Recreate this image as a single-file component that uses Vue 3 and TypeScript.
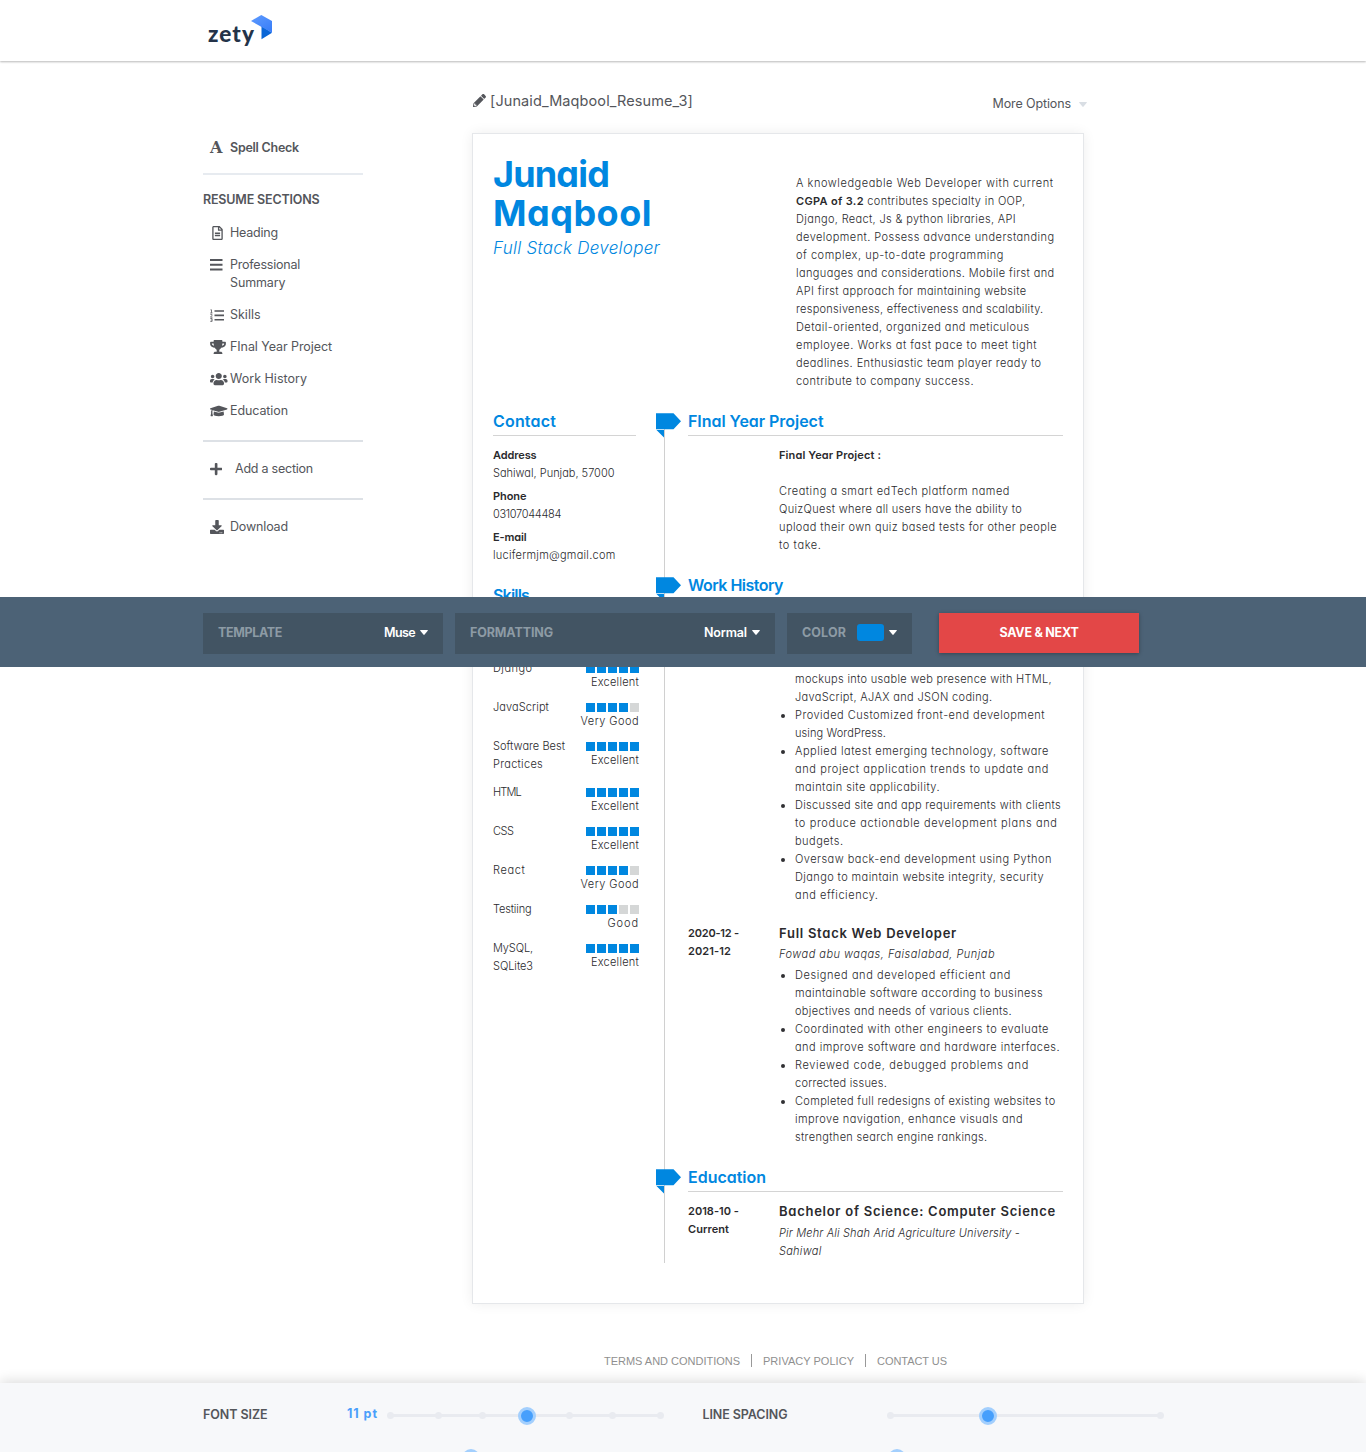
<script setup lang="ts">
import type { Directive } from 'vue'

interface Line { t: string; w: number; b?: string }
interface Skill { name: Line[]; score: number }
interface NavItem { icon: string; lines: Line[] }

// Tracks a line of text out or in so that it occupies the given measure.
const vFit: Directive<HTMLElement, number> = {
  mounted(el, { value }) {
    const count = (el.textContent ?? '').length
    const natural = el.getBoundingClientRect().width
    if (count && natural) el.style.letterSpacing = `${((value - natural) / count).toFixed(4)}px`
  },
}

const nav: NavItem[] = [
  { icon: 'file', lines: [{ t: 'Heading', w: 48 }] },
  { icon: 'bars', lines: [{ t: 'Professional', w: 70 }, { t: 'Summary', w: 55.5 }] },
  { icon: 'list', lines: [{ t: 'Skills', w: 30.5 }] },
  { icon: 'trophy', lines: [{ t: 'FInal Year Project', w: 102 }] },
  { icon: 'users', lines: [{ t: 'Work History', w: 77 }] },
  { icon: 'cap', lines: [{ t: 'Education', w: 58 }] },
]

const summary: Line[] = [
  { t: 'A knowledgeable Web Developer with current', w: 257.5 },
  { b: 'CGPA of 3.2', t: ' contributes specialty in OOP,', w: 229.5 },
  { t: 'Django, React, Js & python libraries, API', w: 220 },
  { t: 'development. Possess advance understanding', w: 258.5 },
  { t: 'of complex, up-to-date programming', w: 208 },
  { t: 'languages and considerations. Mobile first and', w: 258.5 },
  { t: 'API first approach for maintaining website', w: 230.5 },
  { t: 'responsiveness, effectiveness and scalability.', w: 247.5 },
  { t: 'Detail-oriented, organized and meticulous', w: 233.5 },
  { t: 'employee. Works at fast pace to meet tight', w: 241 },
  { t: 'deadlines. Enthusiastic team player ready to', w: 245.5 },
  { t: 'contribute to company success.', w: 178 },
]

const contact = [
  { label: { t: 'Address', w: 43.5 }, value: { t: 'Sahiwal, Punjab, 57000', w: 121.5 } },
  { label: { t: 'Phone', w: 33.5 }, value: { t: '03107044484', w: 68 } },
  { label: { t: 'E-mail', w: 33.5 }, value: { t: 'lucifermjm@gmail.com', w: 122.5 } },
]

const levels: Record<number, Line> = {
  3: { t: 'Good', w: 31.5 },
  4: { t: 'Very Good', w: 58.5 },
  5: { t: 'Excellent', w: 48 },
}

const skills: Skill[] = [
  { name: [{ t: 'Django', w: 39.5 }], score: 5 },
  { name: [{ t: 'JavaScript', w: 56 }], score: 4 },
  { name: [{ t: 'Software Best', w: 72 }, { t: 'Practices', w: 50 }], score: 5 },
  { name: [{ t: 'HTML', w: 28 }], score: 5 },
  { name: [{ t: 'CSS', w: 20.5 }], score: 5 },
  { name: [{ t: 'React', w: 32.5 }], score: 4 },
  { name: [{ t: 'Testiing', w: 38.5 }], score: 3 },
  { name: [{ t: 'MySQL,', w: 40 }, { t: 'SQLite3', w: 40 }], score: 5 },
]

const project: Line[] = [
  { t: 'Creating a smart edTech platform named', w: 231 },
  { t: 'QuizQuest where all users have the ability to', w: 243 },
  { t: 'upload their own quiz based tests for other people', w: 278 },
  { t: 'to take.', w: 42.5 },
]

const firstJob: Line[][] = [
  [{ t: 'Provided Customized front-end development', w: 250 }, { t: 'using WordPress.', w: 91 }],
  [
    { t: 'Applied latest emerging technology, software', w: 254 },
    { t: 'and project application trends to update and', w: 254 },
    { t: 'maintain site applicability.', w: 145 },
  ],
  [
    { t: 'Discussed site and app requirements with clients', w: 266 },
    { t: 'to produce actionable development plans and', w: 262.5 },
    { t: 'budgets.', w: 48.5 },
  ],
  [
    { t: 'Oversaw back-end development using Python', w: 257 },
    { t: 'Django to maintain website integrity, security', w: 249 },
    { t: 'and efficiency.', w: 83.5 },
  ],
]
const firstJobLead: Line[] = [
  { t: 'mockups into usable web presence with HTML,', w: 257 },
  { t: 'JavaScript, AJAX and JSON coding.', w: 197.5 },
]

const secondJob: Line[][] = [
  [
    { t: 'Designed and developed efficient and', w: 216 },
    { t: 'maintainable software according to business', w: 248 },
    { t: 'objectives and needs of various clients.', w: 217 },
  ],
  [
    { t: 'Coordinated with other engineers to evaluate', w: 254 },
    { t: 'and improve software and hardware interfaces.', w: 265 },
  ],
  [{ t: 'Reviewed code, debugged problems and', w: 234 }, { t: 'corrected issues.', w: 92 }],
  [
    { t: 'Completed full redesigns of existing websites to', w: 260.5 },
    { t: 'improve navigation, enhance visuals and', w: 228 },
    { t: 'strengthen search engine rankings.', w: 192.5 },
  ],
]

const fontStops = [0, 48, 92, 137, 179, 222, 270]
</script>

<template>
  <div class="app">
    <header class="top">
      <div class="logo">
        <span class="word" v-fit="47">zety</span>
        <svg class="mark" width="21" height="25" viewBox="0 0 21 25">
          <defs>
            <linearGradient id="fold" x1="0" y1="0" x2="0.7" y2="1">
              <stop offset="0" stop-color="#5f9bff" />
              <stop offset="1" stop-color="#3a7ff8" />
            </linearGradient>
          </defs>
          <path d="M10.500 11L21 17.800 10.500 24.300z" fill="#0a66d6" />
          <path d="M0 6L10.300 0 21 6v11.800z" fill="url(#fold)" />
        </svg>
      </div>
    </header>

    <div class="body">
      <aside class="side">
        <div class="item spell">
          <span class="ico serif">A</span>
          <span class="txt strong"><span v-fit="69">Spell Check</span></span>
        </div>
        <hr class="pale" />
        <div class="caption"><span v-fit="116.5">RESUME SECTIONS</span></div>
        <nav>
          <div v-for="n in nav" :key="n.icon" class="item">
            <span class="ico">
              <svg v-if="n.icon === 'file'" class="shift" width="11" height="14" viewBox="0 0 384 512"><path d="M288 248v28c0 6.6-5.4 12-12 12H108c-6.6 0-12-5.4-12-12v-28c0-6.6 5.4-12 12-12h168c6.6 0 12 5.4 12 12zm-12 72H108c-6.6 0-12 5.4-12 12v28c0 6.6 5.4 12 12 12h168c6.6 0 12-5.4 12-12v-28c0-6.6-5.4-12-12-12zm108-188.1V464c0 26.5-21.5 48-48 48H48c-26.5 0-48-21.5-48-48V48C0 21.5 21.5 0 48 0h204.1C264.8 0 277 5.1 286 14.1L369.9 98c9 8.9 14.1 21.2 14.1 33.9zm-128-80V128h76.1L256 51.9zM336 464V176H232c-13.3 0-24-10.7-24-24V48H48v416h288z" /></svg>
              <svg v-else-if="n.icon === 'bars'" width="13" height="12" viewBox="0 0 13 12"><path d="M0 0h12.500v2H0zM0 4.700h12.500v2H0zM0 9.400h12.500v2H0z" /></svg>
              <svg v-else-if="n.icon === 'list'" width="14" height="13" viewBox="0 0 14 13"><path d="M4.500 1.200H14v1.600H4.500zM4.500 5.600H14v1.600H4.500zM4.500 10H14v1.600H4.500z" /><path d="M.5 .8h1v3M.3 3.900h2.200M.3 5.300h1.600v1.200L.5 8.200h2M.3 9.500h1.800v2.900H.3M.8 11h1" fill="none" stroke="#54565b" stroke-width=".8" /></svg>
              <svg v-else-if="n.icon === 'trophy'" width="16" height="14" viewBox="0 0 576 512"><path d="M552 64H448V24c0-13.3-10.7-24-24-24H152c-13.3 0-24 10.7-24 24v40H24C10.7 64 0 74.7 0 88v56c0 35.7 22.5 72.4 61.9 100.7 31.5 22.7 69.8 37.1 110 41.7C203.3 338.5 240 360 240 360v72h-48c-35.3 0-64 20.7-64 56v12c0 6.6 5.4 12 12 12h296c6.6 0 12-5.4 12-12v-12c0-35.3-28.7-56-64-56h-48v-72s36.7-21.5 68.1-73.6c40.3-4.6 78.6-19 110-41.7 39.3-28.3 61.9-65 61.9-100.7V88c0-13.3-10.7-24-24-24zM99.3 192.8C74.9 175.2 64 155.6 64 144v-16h64.2c1 32.6 5.8 61.2 12.8 86.2-15.1-5.2-29.2-12.4-41.7-21.4zM512 144c0 16.1-17.7 36.1-35.3 48.8-12.5 9-26.7 16.2-41.8 21.4 7-25 11.8-53.6 12.8-86.2H512v16z" /></svg>
              <svg v-else-if="n.icon === 'users'" width="17.5" height="14" viewBox="0 0 640 512"><path d="M96 224c35.3 0 64-28.7 64-64s-28.7-64-64-64-64 28.7-64 64 28.7 64 64 64zm448 0c35.3 0 64-28.7 64-64s-28.7-64-64-64-64 28.7-64 64 28.7 64 64 64zm32 32h-64c-17.6 0-33.5 7.1-45.1 18.6 40.3 22.1 68.9 62 75.1 109.4h66c17.7 0 32-14.3 32-32v-32c0-35.3-28.7-64-64-64zm-256 0c61.9 0 112-50.1 112-112S381.9 32 320 32 208 82.1 208 144s50.1 112 112 112zm76.8 32h-8.3c-20.8 10-43.9 16-68.5 16s-47.6-6-68.5-16h-8.3C179.6 288 128 339.6 128 403.2V432c0 26.5 21.5 48 48 48h288c26.5 0 48-21.5 48-48v-28.8c0-63.6-51.6-115.2-115.2-115.2zm-223.7-13.4C161.5 263.1 145.6 256 128 256H64c-35.3 0-64 28.7-64 64v32c0 17.7 14.3 32 32 32h65.900c6.300-47.400 34.900-87.300 75.200-109.400z" /></svg>
              <svg v-else width="17.5" height="14" viewBox="0 0 640 512"><path d="M622.34 153.2L343.4 67.5c-15.2-4.67-31.6-4.67-46.79 0L17.66 153.2c-23.54 7.23-23.54 38.36 0 45.59l48.63 14.94c-10.67 13.19-17.23 29.28-17.88 46.9C38.78 266.15 32 276.11 32 288c0 10.78 5.68 19.85 13.86 25.65L20.33 428.53C18.11 438.52 25.71 448 35.94 448h56.11c10.24 0 17.84-9.48 15.62-19.47L82.14 313.65C90.32 307.85 96 298.78 96 288c0-11.57-6.47-21.25-15.66-26.87.76-15.02 8.44-28.3 20.69-36.72L296.6 284.5c9.06 2.78 26.44 6.25 46.79 0l278.95-85.7c23.55-7.24 23.55-38.36 0-45.6zM352.79 315.09c-28.53 8.76-52.84 3.92-65.59 0l-145.02-44.55L128 384c0 35.35 85.96 64 192 64s192-28.65 192-64l-14.18-113.47-145.03 44.56z" /></svg>
            </span>
            <span class="txt"><span v-for="l in n.lines" :key="l.t" v-fit="l.w">{{ l.t }}</span></span>
          </div>
        </nav>
        <hr class="after-nav" />
        <div class="item add">
          <span class="ico"><svg width="12.25" height="14" viewBox="0 0 448 512"><path d="M416 208H272V64c0-17.67-14.33-32-32-32h-32c-17.67 0-32 14.33-32 32v144H32c-17.67 0-32 14.33-32 32v32c0 17.67 14.33 32 32 32h144v144c0 17.67 14.33 32 32 32h32c17.67 0 32-14.33 32-32V304h144c17.67 0 32-14.33 32-32v-32c0-17.67-14.33-32-32-32z" /></svg></span>
          <span class="txt"><span v-fit="78">Add a section</span></span>
        </div>
        <hr />
        <div class="item dl">
          <span class="ico"><svg width="14" height="14" viewBox="0 0 512 512"><path d="M216 0h80c13.3 0 24 10.7 24 24v168h87.7c17.8 0 26.7 21.5 14.1 34.1L269.7 378.3c-7.5 7.5-19.8 7.5-27.3 0L90.1 226.1c-12.6-12.6-3.7-34.1 14.1-34.1H192V24c0-13.3 10.7-24 24-24zm296 376v112c0 13.3-10.7 24-24 24H24c-13.3 0-24-10.7-24-24V376c0-13.3 10.7-24 24-24h146.7l49 49c20.1 20.1 52.5 20.1 72.6 0l49-49H488c13.3 0 24 10.7 24 24zm-124 88c0-11-9-20-20-20s-20 9-20 20 9 20 20 20 20-9 20-20zm64 0c0-11-9-20-20-20s-20 9-20 20 9 20 20 20 20-9 20-20z" /></svg></span>
          <span class="txt"><span v-fit="58">Download</span></span>
        </div>
      </aside>

      <main class="main">
        <div class="titlebar">
          <div class="doc-name">
            <svg width="13" height="13" viewBox="0 0 512 512"><path d="M497.9 142.1l-46.1 46.1c-4.7 4.7-12.3 4.7-17 0l-111-111c-4.7-4.7-4.7-12.3 0-17l46.1-46.1c18.7-18.7 49.1-18.7 67.9 0l60.1 60.1c18.8 18.7 18.8 49.1 0 67.9zM284.2 99.8L21.6 362.4.4 483.9c-2.9 16.4 11.4 30.6 27.8 27.8l121.5-21.3 262.6-262.6c4.7-4.7 4.7-12.3 0-17l-111-111c-4.8-4.7-12.4-4.7-17.1 0zM88 424h48v36.3l-64.5 11.3-31.1-31.1L51.7 376H88v48z" /></svg>
            <span v-fit="203">[Junaid_Maqbool_Resume_3]</span>
          </div>
          <div class="more">
            <span v-fit="78.5">More Options</span>
            <svg width="8" height="5" viewBox="0 0 8 5"><path d="M.7 0h6.6q1 0 .4.8L4.600 4.600q-.6.6-1.200 0L.3.8Q-.3 0 .7 0z" /></svg>
          </div>
        </div>

        <article class="page">
          <div class="intro">
            <div class="who">
              <h1><span v-fit="116">Junaid</span><span v-fit="159">Maqbool</span></h1>
              <p class="role"><span v-fit="167">Full Stack Developer</span></p>
            </div>
            <div class="summary">
              <span v-for="l in summary" :key="l.t" class="line"><span v-fit="l.w"><b v-if="l.b">{{ l.b }}</b>{{ l.t }}</span></span>
            </div>
          </div>

          <div class="columns">
            <section class="left">
              <h2><span v-fit="63">Contact</span></h2>
              <div v-for="c in contact" :key="c.label.t" class="contact">
                <b class="line"><span v-fit="c.label.w">{{ c.label.t }}</span></b>
                <span class="line"><span v-fit="c.value.w">{{ c.value.t }}</span></span>
              </div>
              <h2 class="next"><span v-fit="36">Skills</span></h2>
              <div class="skills">
                <div v-for="s in skills" :key="s.name[0].t" class="skill">
                  <div class="skill-name"><span v-for="l in s.name" :key="l.t" class="line"><span v-fit="l.w">{{ l.t }}</span></span></div>
                  <div class="rating">
                    <div class="squares"><i v-for="k in 5" :key="k" :class="{ on: k <= s.score }"></i></div>
                    <span class="level"><span v-fit="levels[s.score].w">{{ levels[s.score].t }}</span></span>
                  </div>
                </div>
              </div>
            </section>

            <section class="right">
              <h2>
                <svg class="flag" width="25" height="25" viewBox="0 0 25 25"><path d="M0 .3h17.500L25 8.300l-7.500 8H0zM.5 17H8v7.500z" /></svg>
                <span v-fit="135.5">FInal Year Project</span>
              </h2>
              <div class="entry">
                <div class="dates"></div>
                <div class="detail">
                  <b class="line blank-after"><span v-fit="102">Final Year Project :</span></b>
                  <span v-for="l in project" :key="l.t" class="line"><span v-fit="l.w">{{ l.t }}</span></span>
                </div>
              </div>

              <h2 class="next">
                <svg class="flag" width="25" height="25" viewBox="0 0 25 25"><path d="M0 .3h17.500L25 8.300l-7.500 8H0zM.5 17H8v7.500z" /></svg>
                <span v-fit="95">Work History</span>
              </h2>
              <div class="entry current">
                <div class="dates"></div>
                <div class="detail">
                  <div class="lead"><span v-for="l in firstJobLead" :key="l.t" class="line"><span v-fit="l.w">{{ l.t }}</span></span></div>
                  <ul>
                    <li v-for="(item, k) in firstJob" :key="k"><div><span v-for="l in item" :key="l.t" class="line"><span v-fit="l.w">{{ l.t }}</span></span></div></li>
                  </ul>
                </div>
              </div>
              <div class="entry second">
                <div class="dates"><b class="line"><span v-fit="51">2020-12 -</span></b><b class="line"><span v-fit="43">2021-12</span></b></div>
                <div class="detail">
                  <h3><span v-fit="178">Full Stack Web Developer</span></h3>
                  <em class="place"><span class="line"><span v-fit="216">Fowad abu waqas, Faisalabad, Punjab</span></span></em>
                  <ul>
                    <li v-for="(item, k) in secondJob" :key="k"><div><span v-for="l in item" :key="l.t" class="line"><span v-fit="l.w">{{ l.t }}</span></span></div></li>
                  </ul>
                </div>
              </div>

              <h2 class="next">
                <svg class="flag" width="25" height="25" viewBox="0 0 25 25"><path d="M0 .3h17.500L25 8.300l-7.500 8H0zM.5 17H8v7.500z" /></svg>
                <span v-fit="78">Education</span>
              </h2>
              <div class="entry">
                <div class="dates"><b class="line"><span v-fit="51">2018-10 -</span></b><b class="line"><span v-fit="41">Current</span></b></div>
                <div class="detail">
                  <h3><span v-fit="277">Bachelor of Science: Computer Science</span></h3>
                  <em class="place school"><span class="line"><span v-fit="241">Pir Mehr Ali Shah Arid Agriculture University -</span></span><span class="line"><span v-fit="42.5">Sahiwal</span></span></em>
                </div>
              </div>
            </section>
          </div>
        </article>

        <footer class="links">
          <a><span v-fit="136">TERMS AND CONDITIONS</span></a>
          <a><span v-fit="91">PRIVACY POLICY</span></a>
          <a><span v-fit="70">CONTACT US</span></a>
        </footer>
      </main>
    </div>

    <div class="toolbar">
      <div class="pick template">
        <span class="lbl"><span v-fit="64">TEMPLATE</span></span>
        <span class="val"><span v-fit="31">Muse</span></span>
        <svg width="8" height="5" viewBox="0 0 8 5"><path d="M.7 0h6.6q1 0 .4.8L4.600 4.600q-.6.6-1.200 0L.3.8Q-.3 0 .7 0z" /></svg>
      </div>
      <div class="pick formatting">
        <span class="lbl"><span v-fit="83">FORMATTING</span></span>
        <span class="val"><span v-fit="43">Normal</span></span>
        <svg width="8" height="5" viewBox="0 0 8 5"><path d="M.7 0h6.6q1 0 .4.8L4.600 4.600q-.6.6-1.200 0L.3.8Q-.3 0 .7 0z" /></svg>
      </div>
      <div class="pick color">
        <span class="lbl"><span v-fit="44">COLOR</span></span>
        <i class="swatch"></i>
        <svg width="8" height="5" viewBox="0 0 8 5"><path d="M.7 0h6.6q1 0 .4.8L4.600 4.600q-.6.6-1.200 0L.3.8Q-.3 0 .7 0z" /></svg>
      </div>
      <button class="save"><span v-fit="79">SAVE &amp; NEXT</span></button>
    </div>

    <div class="settings">
      <div class="setting">
        <span class="name"><span v-fit="64.5">FONT SIZE</span></span>
        <span class="amount"><span v-fit="31">11 pt</span></span>
        <div class="slider">
          <i v-for="s in fontStops" :key="s" class="stop" :style="{ left: s + 'px' }"></i>
          <i class="knob" :style="{ left: '137px' }"></i>
          <i class="knob lower" :style="{ left: '81px' }"></i>
        </div>
      </div>
      <div class="setting spacing">
        <span class="name"><span v-fit="85">LINE SPACING</span></span>
        <div class="slider">
          <i v-for="s in [0, 270]" :key="s" class="stop" :style="{ left: s + 'px' }"></i>
          <i class="knob" :style="{ left: '98px' }"></i>
          <i class="knob lower" :style="{ left: '7px' }"></i>
        </div>
      </div>
    </div>
  </div>
</template>

<style>
body { background: #fff; }
</style>

<style scoped>
* { box-sizing: border-box; }
.app {
  position: relative;
  display: flex;
  flex-direction: column;
  width: 1366px;
  height: 1452px;
  overflow: hidden;
  background: #fff;
  color: #54565b;
  font-family: Inter, "Liberation Sans", sans-serif;
  font-size: 12.5px;
}
svg { display: block; flex: none; fill: #54565b; }
h1, h2, h3, p, ul { margin: 0; padding: 0; font-weight: 600; }
span { white-space: pre; }

.top {
  flex: none;
  height: 61px;
  background: #fff;
  box-shadow: 0 1px 2px rgba(0, 0, 0, .28);
  padding: 15px 0 0 208px;
}
.logo { display: flex; }
.word {
  display: inline-block;
  height: 34px;
  margin-top: 2px;
  line-height: 34px;
  font-family: Lato, "Open Sans", sans-serif;
  font-weight: 900;
  font-size: 22.5px;
  color: #243349;
}
.mark { margin-left: -4px; }

.body { display: flex; flex: none; height: 1322px; padding-left: 203px; }
.side { width: 160px; margin-right: 109px; padding-top: 78px; flex: none; }
.side hr { height: 2px; margin: 0; border: 0; background: #dde1e6; }
.side hr.pale { margin-top: 16px; background: #e7ebf0; }
.item { display: flex; line-height: 18px; margin-bottom: 14px; padding-left: 7px; }
.item.spell { margin: 0; }
.ico { display: flex; align-items: center; width: 20px; height: 18px; flex: none; }
.ico .shift { margin-left: 2px; }
.serif { font: 700 16px/18px "DejaVu Serif", serif; }
.txt { display: flex; flex-direction: column; align-items: flex-start; }
.strong { font-weight: 600; }
.caption { margin: 16px 0 15px; line-height: 18px; font-weight: 600; }
.side hr.after-nav { margin-top: 20px; }
.item.add { margin: 18px 0 20px; }
.item.add .ico { width: 25px; }
.item.dl { margin-top: 18px; }

.main { width: 615px; flex: none; }
.titlebar { display: flex; justify-content: space-between; height: 72px; }
.doc-name { display: flex; align-items: center; gap: 4px; height: 20px; margin-top: 29px; padding-left: 1px; font-size: 14.5px; }
.more { display: flex; align-items: center; gap: 8px; height: 20px; margin-top: 32px; }
.more svg { fill: #d9dee4; margin-top: 3px; }

.page {
  width: 612px;
  height: 1171px;
  padding: 21px 20px 0;
  border: 1px solid #e5e7ea;
  box-shadow: 0 0 12px rgba(0, 0, 0, .07);
  color: #2a2a2d;
  font-size: 11px;
  font-weight: 300;
  font-feature-settings: "cv11" 1;
  background: #fff;
}
.line { display: flex; height: 18px; line-height: 18.500px; }
b { font-weight: 600; }
.intro { display: flex; height: 256px; }
.who { width: 303px; color: #0087e0; }
h1 { display: flex; flex-direction: column; align-items: flex-start; font-size: 36px; font-weight: 700; line-height: 39px; }
.role { margin-top: 5px; font-size: 17px; line-height: 20px; font-style: italic; font-weight: 300; }
.summary { padding-top: 19px; }

.columns { display: flex; }
.left { width: 146px; margin-right: 25px; }
h2 {
  position: relative;
  height: 25px;
  margin-bottom: 10px;
  border-bottom: 1px solid #d4d4d4;
  color: #0087e0;
  font-size: 16px;
  line-height: 20px;
}
.left h2 { width: 143px; }
h2.next { margin-top: 21px; }
.contact + .contact { margin-top: 5px; }
.skills { padding-top: 39px; }
.skill { display: flex; justify-content: space-between; }
.skill-name .line:last-child:not(:first-child) { margin-bottom: 10px; }
.rating { height: 39px; padding-top: 5px; }
.squares { display: flex; justify-content: flex-end; gap: 2px; height: 11px; }
.squares i { width: 9px; height: 9px; background: #d5d7d7; }
.squares i.on { background: #0087e0; }
.level { display: flex; justify-content: flex-end; line-height: 14.500px; }

.right { position: relative; width: 399px; height: 852px; padding-left: 24px; }
.right::before { content: ""; position: absolute; left: 0; top: 6px; bottom: 0; width: 1px; background: #d0d0d0; }
.flag { position: absolute; left: -32px; top: 2px; fill: #0087e0; }
.entry { display: flex; }
.dates { width: 91px; flex: none; }
.blank-after { margin-bottom: 18px; }
.entry.current { padding-top: 60px; }
.entry.second { margin-top: 20px; }
.lead { padding-left: 16px; }
ul { list-style: none; font-weight: 300; }
li { display: flex; }
li::before { content: ""; width: 4px; height: 4px; margin: 8px 10px 0 2px; border-radius: 50%; background: #303033; }
h3 { height: 18px; font-size: 13px; line-height: 18px; }
.place { display: block; margin: 3px 0; }
.place.school { margin-top: 4px; }

.links {
  display: flex;
  margin: 50px 0 0 132px;
  font: 11px/13px "Liberation Sans", Arial, sans-serif;
  color: #8f8f8f;
}
.links a { display: block; line-height: 15px; height: 13px; }
.links a + a { margin-left: 11px; padding-left: 11px; border-left: 1px solid #999; }

.toolbar {
  position: absolute;
  left: 0;
  top: 597px;
  display: flex;
  width: 1366px;
  height: 70px;
  padding: 16px 0 0 203px;
  background: #4c6276;
}
.pick { display: flex; align-items: center; height: 41px; margin-right: 12px; padding: 0 15px 2px; background: #425463; font-weight: 700; }
.template { width: 240px; }
.formatting { width: 320px; }
.color { width: 125px; }
.pick svg { margin-left: 5px; fill: #fff; }
.lbl { margin-right: auto; color: #8d9ba5; }
.val { color: #fff; font-weight: 600; }
.swatch { width: 27px; height: 17px; border-radius: 3px; background: #0087e0; }
.save {
  width: 200px;
  height: 40px;
  margin-left: 15px;
  padding: 0 0 1px;
  border: 0;
  background: #e34747;
  box-shadow: 0 1px 4px rgba(0, 0, 0, .3);
  color: #fff;
  font: 700 12.5px Inter, sans-serif;
}

.settings {
  position: relative;
  display: flex;
  flex: none;
  height: 69px;
  padding: 22px 0 0 203px;
  background: #f7f8fa;
  box-shadow: 0 -2px 12px rgba(0, 0, 0, .14);
}
.setting { display: flex; width: 499.500px; height: 20px; line-height: 20px; font-weight: 600; }
.name { width: 144px; }
.amount { width: 43px; color: #4a9ffb; font-weight: 700; line-height: 18px; }
.spacing .name { width: 187.500px; }
.slider { position: relative; width: 270px; height: 3px; margin-top: 9px; background: #e9ebf0; }
.stop, .knob { position: absolute; border-radius: 50%; }
.stop { top: -2px; width: 7px; height: 7px; margin-left: -3.500px; background: #e9ebf0; }
.knob { top: -7px; width: 18px; height: 18px; margin-left: -9px; border: 3px solid #a3cffd; background: #469ffc; }
.lower { top: 35px; }
</style>
